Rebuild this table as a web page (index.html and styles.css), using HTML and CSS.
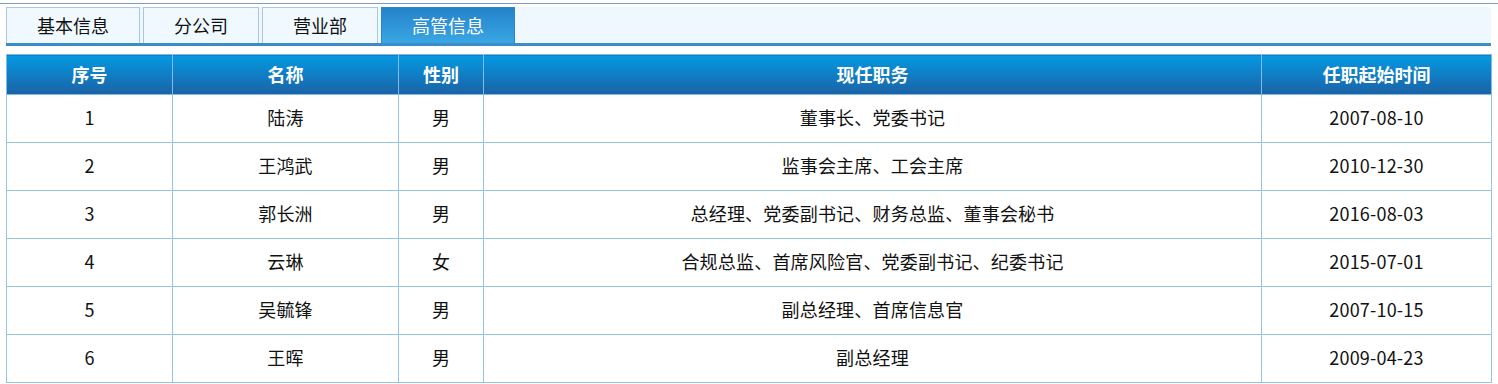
FILE: index.html
```html
<!DOCTYPE html>
<html lang="zh-CN">
<head>
<meta charset="utf-8">
<title>高管信息</title>
<link rel="stylesheet" href="styles.css">
</head>
<body>
<div class="page">
  <div class="tabbar">
    <div class="tab">基本信息</div>
    <div class="tab">分公司</div>
    <div class="tab">营业部</div>
    <div class="tab active">高管信息</div>
  </div>
  <table class="grid">
    <colgroup>
      <col class="c1"><col class="c2"><col class="c3"><col class="c4"><col class="c5">
    </colgroup>
    <thead>
      <tr><th>序号</th><th>名称</th><th>性别</th><th>现任职务</th><th>任职起始时间</th></tr>
    </thead>
    <tbody>
      <tr><td>1</td><td>陆涛</td><td>男</td><td>董事长、党委书记</td><td>2007-08-10</td></tr>
      <tr><td>2</td><td>王鸿武</td><td>男</td><td>监事会主席、工会主席</td><td>2010-12-30</td></tr>
      <tr><td>3</td><td>郭长洲</td><td>男</td><td>总经理、党委副书记、财务总监、董事会秘书</td><td>2016-08-03</td></tr>
      <tr><td>4</td><td>云琳</td><td>女</td><td>合规总监、首席风险官、党委副书记、纪委书记</td><td>2015-07-01</td></tr>
      <tr><td>5</td><td>吴毓锋</td><td>男</td><td>副总经理、首席信息官</td><td>2007-10-15</td></tr>
      <tr><td>6</td><td>王晖</td><td>男</td><td>副总经理</td><td>2009-04-23</td></tr>
    </tbody>
  </table>
</div>
</body>
</html>
```
FILE: styles.css
```css
html, body {
  margin: 0;
  padding: 0;
  background: #ffffff;
}
body {
  padding-top: 3px;
  font-family: "Noto Sans CJK SC", "Noto Sans", sans-serif;
  font-size: 18px;
  color: #111;
}
.page {
  border-top: 1px solid #7f9bcb;
  padding: 3px 7px 0 6px;
}
.tabbar {
  display: flex;
  gap: 3px;
  height: 36px;
  background: #eef8fe;
  border-bottom: 3px solid #3a8cca;
}
.tab {
  box-sizing: border-box;
  height: 36px;
  padding: 0 30px;
  border: 1px solid #a9c8e6;
  border-bottom: none;
  background: #eff9ff;
  color: #111;
  line-height: 35px;
  white-space: nowrap;
}
.tab.active {
  border-color: #2a86cc;
  background: linear-gradient(#2482cb, #3aa7e3);
  color: #ffffff;
}
.grid {
  margin-top: 8px;
  width: 1485px;
  border-collapse: collapse;
  table-layout: fixed;
}
.c1 { width: 166px; }
.c2 { width: 226px; }
.c3 { width: 85px; }
.c4 { width: 778px; }
.c5 { width: 230px; }
.grid th {
  box-sizing: border-box;
  height: 40px;
  padding: 0 0 2px;
  border: 1px solid #7fbcea;
  background: linear-gradient(#0499e2, #1b62a5);
  color: #ffffff;
  font-weight: bold;
  text-align: center;
  line-height: 20px;
}
.grid td {
  box-sizing: border-box;
  height: 48px;
  padding: 0 0 4px;
  border: 1px solid #94c4ec;
  text-align: center;
  line-height: 20px;
  letter-spacing: 0.2px;
}
```
